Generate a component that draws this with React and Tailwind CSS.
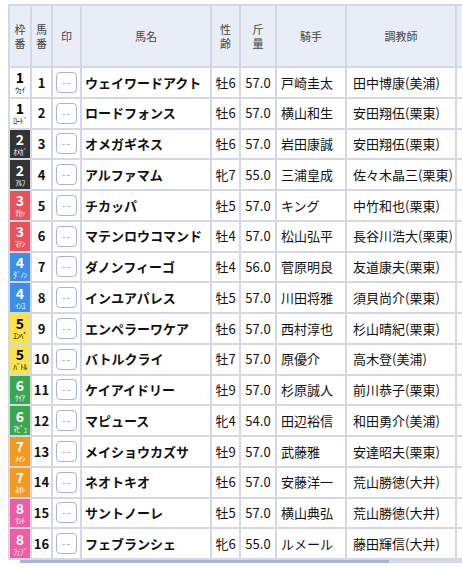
import React from 'react';

const WAKU_STYLES = {
  1: 'bg-white text-black',
  2: 'bg-[#333333] text-white',
  3: 'bg-[#e9525a] text-white',
  4: 'bg-[#3b8fe6] text-white',
  5: 'bg-[#fde24a] text-black',
  6: 'bg-[#3ba74f] text-white',
  7: 'bg-[#f39a1f] text-white',
  8: 'bg-[#ee5ca6] text-white',
};

const HORSES = [
  { waku: 1, num: 1, short: 'ｳｪｲ', name: 'ウェイワードアクト', sex: '牡6', kg: '57.0', jockey: '戸崎圭太', trainer: '田中博康(美浦)' },
  { waku: 1, num: 2, short: 'ﾛｰﾄﾞ', name: 'ロードフォンス', sex: '牡6', kg: '57.0', jockey: '横山和生', trainer: '安田翔伍(栗東)' },
  { waku: 2, num: 3, short: 'ｵﾒｶﾞ', name: 'オメガギネス', sex: '牡6', kg: '57.0', jockey: '岩田康誠', trainer: '安田翔伍(栗東)' },
  { waku: 2, num: 4, short: 'ｱﾙﾌ', name: 'アルファマム', sex: '牝7', kg: '55.0', jockey: '三浦皇成', trainer: '佐々木晶三(栗東)' },
  { waku: 3, num: 5, short: 'ﾁｶｯ', name: 'チカッパ', sex: '牡5', kg: '57.0', jockey: 'キング', trainer: '中竹和也(栗東)' },
  { waku: 3, num: 6, short: 'ﾏﾃﾝ', name: 'マテンロウコマンド', sex: '牡4', kg: '57.0', jockey: '松山弘平', trainer: '長谷川浩大(栗東)' },
  { waku: 4, num: 7, short: 'ﾀﾞﾉﾝ', name: 'ダノンフィーゴ', sex: '牡4', kg: '56.0', jockey: '菅原明良', trainer: '友道康夫(栗東)' },
  { waku: 4, num: 8, short: 'ｲﾝﾕ', name: 'インユアパレス', sex: '牡5', kg: '57.0', jockey: '川田将雅', trainer: '須貝尚介(栗東)' },
  { waku: 5, num: 9, short: 'ｴﾝﾍﾟ', name: 'エンペラーワケア', sex: '牡6', kg: '57.0', jockey: '西村淳也', trainer: '杉山晴紀(栗東)' },
  { waku: 5, num: 10, short: 'ﾊﾞﾄﾙ', name: 'バトルクライ', sex: '牡7', kg: '57.0', jockey: '原優介', trainer: '高木登(美浦)' },
  { waku: 6, num: 11, short: 'ｹｲｱ', name: 'ケイアイドリー', sex: '牡9', kg: '57.0', jockey: '杉原誠人', trainer: '前川恭子(栗東)' },
  { waku: 6, num: 12, short: 'ﾏﾋﾟｭ', name: 'マピュース', sex: '牝4', kg: '54.0', jockey: '田辺裕信', trainer: '和田勇介(美浦)' },
  { waku: 7, num: 13, short: 'ﾒｲｼ', name: 'メイショウカズサ', sex: '牡9', kg: '57.0', jockey: '武藤雅', trainer: '安達昭夫(栗東)' },
  { waku: 7, num: 14, short: 'ﾈｵﾄ', name: 'ネオトキオ', sex: '牡6', kg: '57.0', jockey: '安藤洋一', trainer: '荒山勝徳(大井)' },
  { waku: 8, num: 15, short: 'ｻﾝﾄ', name: 'サントノーレ', sex: '牡5', kg: '57.0', jockey: '横山典弘', trainer: '荒山勝徳(大井)' },
  { waku: 8, num: 16, short: 'ﾌｪﾌﾞ', name: 'フェブランシェ', sex: '牝6', kg: '55.0', jockey: 'ルメール', trainer: '藤田輝信(大井)' },
];

const th = 'border-2 border-[#d4d8e6] bg-[#e9edf7] text-[11px] leading-[14px] font-normal text-[#444] text-center align-middle';
const td = 'border-2 border-[#d4d8e6] h-[30.75px] p-0 align-middle';

export default function App() {
  return (
    <div className="bg-white pt-1 font-['Noto_Sans_CJK_JP',sans-serif] text-[#111]">
      <div className="overflow-x-hidden pl-2">
        <table className="table-fixed border-collapse w-[548px]">
          <colgroup>
            <col className="w-[22px]" />
            <col className="w-[21px]" />
            <col className="w-[29px]" />
            <col className="w-[130px]" />
            <col className="w-[29px]" />
            <col className="w-[36px]" />
            <col className="w-[70px]" />
            <col className="w-[110px]" />
            <col className="w-[101px]" />
          </colgroup>
          <thead>
            <tr className="h-[62px]">
              <th className={th}>枠<br />番</th>
              <th className={th}>馬<br />番</th>
              <th className={th}>印</th>
              <th className={th}>馬名</th>
              <th className={th}>性<br />齢</th>
              <th className={th}>斤<br />量</th>
              <th className={th}>騎手</th>
              <th className={th}>調教師</th>
              <th className={th}></th>
            </tr>
          </thead>
          <tbody>
            {HORSES.map((h) => (
              <tr key={h.num}>
                <td className={`${td} ${WAKU_STYLES[h.waku]}`}>
                  <div className="flex flex-col items-center leading-none">
                    <span className="text-[14px] font-bold leading-[15px]">{h.waku}</span>
                    <span className="text-[7.5px] leading-[9px] whitespace-nowrap tracking-[-0.5px]">{h.short}</span>
                  </div>
                </td>
                <td className={`${td} text-center text-[13px] font-bold`}>{h.num}</td>
                <td className={td}>
                  <div className="flex justify-center">
                    <div className="w-[21px] h-[21px] rounded-[4px] border border-[#a8b3dc] flex items-center justify-center text-[11px] leading-none text-[#a3aac4] tracking-[1px]">--</div>
                  </div>
                </td>
                <td className={`${td} pl-[3px] text-[13px] font-bold whitespace-nowrap`}>{h.name}</td>
                <td className={`${td} text-center text-[13px]`}>{h.sex}</td>
                <td className={`${td} text-center text-[13px]`}>{h.kg}</td>
                <td className={`${td} pl-[4px] text-[13px] whitespace-nowrap`}>{h.jockey}</td>
                <td className={`${td} pl-[6px] text-[13px] whitespace-nowrap`}>{h.trainer}</td>
                <td className={td}></td>
              </tr>
            ))}
          </tbody>
        </table>
      </div>
      {/* scroll indicator */}
      <div className="ml-[20px] flex h-[3px] bg-[#d3d8ea]">
        <div className="w-[369px] bg-[#a7b3da]" />
      </div>
    </div>
  );
}
